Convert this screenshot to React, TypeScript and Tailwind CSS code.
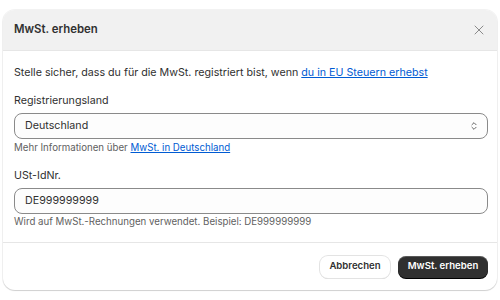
import { X, ChevronsUpDown } from 'lucide-react';

export default function App() {
    return (
        <div className="w-[500px] h-[300px] bg-white pt-[10px] px-[3px] font-['Inter',sans-serif] text-[#303030]">
            <div className="rounded-[12px] bg-white overflow-hidden shadow-[0_0_0_1px_rgba(0,0,0,0.05),0_1px_1px_rgba(0,0,0,0.14)] h-[280px] flex flex-col">
                <div className="h-[41px] shrink-0 bg-[#f1f1f1] border-b border-[#e6e6e6] flex items-center justify-between pl-[11px] pr-[10px]">
                    <h2 className="text-[11.4px] font-semibold text-[#303030]">MwSt. erheben</h2>
                    <X className="w-[16px] h-[16px] text-[#8a8a8a]" strokeWidth={1.5} />
                </div>
                <div className="pl-[11px] pr-[9px] pt-[14px] flex-1">
                    <p className="text-[10.7px] leading-4">
                        Stelle sicher, dass du für die MwSt. registriert bist, wenn{' '}
                        <a href="#" className="text-[#005bd3] underline">du in EU Steuern erhebst</a>
                    </p>
                    <label className="mt-[12px] block text-[10.7px] leading-4">Registrierungsland</label>
                    <div className="mt-[4px] h-[26px] rounded-[8px] border border-[#8a8a8a] bg-[#fdfdfd] flex items-center justify-between pl-[10px] pr-[8px]">
                        <span className="text-[10.7px]">Deutschland</span>
                        <ChevronsUpDown className="w-[10px] h-[10px] text-[#4a4a4a]" strokeWidth={2} />
                    </div>
                    <p className="mt-[2px] text-[9.7px] leading-[14px] text-[#616161]">
                        Mehr Informationen über{' '}
                        <a href="#" className="text-[#005bd3] underline">MwSt. in Deutschland</a>
                    </p>
                    <label className="mt-[13px] block text-[10.7px] leading-4">USt-IdNr.</label>
                    <div className="mt-[4px] h-[26px] rounded-[8px] border border-[#8a8a8a] bg-[#fdfdfd] flex items-center pl-[10px]">
                        <span className="text-[10.7px]">DE999999999</span>
                    </div>
                    <p className="mt-[1px] text-[9.7px] leading-[14px] text-[#616161]">
                        Wird auf MwSt.-Rechnungen verwendet. Beispiel: DE999999999
                    </p>
                </div>
                <div className="h-[48px] shrink-0 border-t border-[#e6e6e6] flex items-center justify-end gap-[8px] pr-[9px]">
                    <button className="h-[22px] w-[70px] rounded-[8px] bg-white text-[9.6px] font-semibold text-[#303030] shadow-[0_0_0_1px_#e3e3e3,0_1px_0_#cfcfcf]">
                        Abbrechen
                    </button>
                    <button className="h-[22px] w-[90px] rounded-[8px] bg-[#303030] text-[9.6px] font-semibold text-white shadow-[0_1px_0_#000,inset_0_1px_0_rgba(255,255,255,0.2)]">
                        MwSt. erheben
                    </button>
                </div>
            </div>
        </div>
    );
}
